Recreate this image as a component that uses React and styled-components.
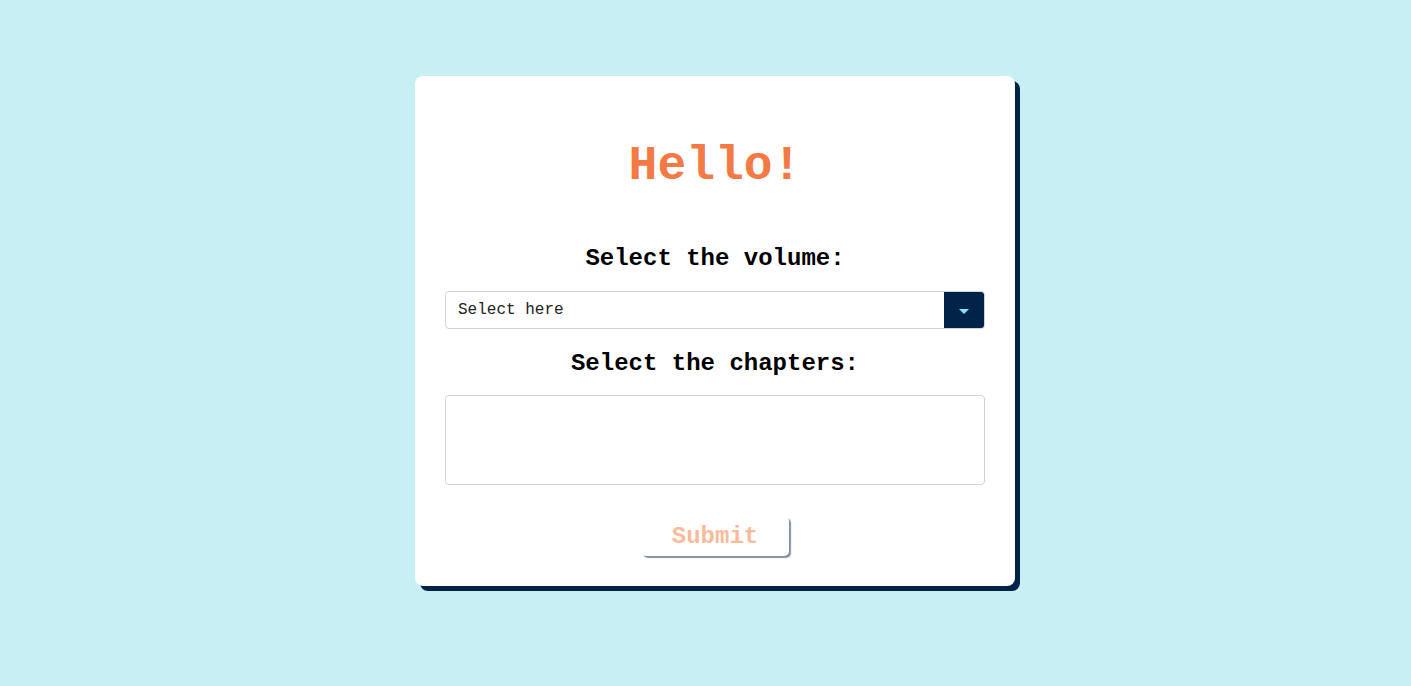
import React from "react";
import styled, { createGlobalStyle } from "styled-components";

const Global = createGlobalStyle`
  html, body { margin: 0; padding: 0; background: #c8eff4; }
  body { font-family: "Liberation Mono", "Courier New", monospace; }
`;

const Page = styled.div`
  min-height: 686px;
  display: flex;
  justify-content: center;
  align-items: flex-start;
  padding: 76px 0 0 19px;
  box-sizing: border-box;
`;

const Card = styled.form`
  width: 600px;
  box-sizing: border-box;
  background: #ffffff;
  border-radius: 8px;
  box-shadow: 5px 5px 0 #002347;
  padding: 30px 30px 30px;
  display: flex;
  flex-direction: column;
  align-items: stretch;
`;

const Title = styled.h1`
  margin: 32px 0 0;
  font-size: 48px;
  line-height: 56px;
  font-weight: 700;
  color: #f47a45;
  text-align: center;
`;

const Label = styled.label`
  display: block;
  margin-top: ${(p) => p.$top}px;
  font-size: 24px;
  line-height: 28px;
  font-weight: 700;
  color: #000;
  text-align: center;
`;

const SelectBox = styled.div`
  margin-top: 18px;
  height: 38px;
  box-sizing: border-box;
  border: 1px solid #cfd3d9;
  border-radius: 4px;
  display: flex;
  align-items: stretch;
  overflow: hidden;
`;

const SelectText = styled.div`
  flex: 1;
  display: flex;
  align-items: center;
  padding-left: 12px;
  font-size: 16px;
  color: #222;
`;

const Arrow = styled.div`
  width: 40px;
  background: #002347;
  display: flex;
  align-items: center;
  justify-content: center;
  &::after {
    content: "";
    width: 0;
    height: 0;
    border-left: 5px solid transparent;
    border-right: 5px solid transparent;
    border-top: 5px solid #7fe9f7;
    margin-top: 2px;
  }
`;

const Area = styled.div`
  margin-top: 17px;
  height: 90px;
  box-sizing: border-box;
  border: 1px solid #cfd3d9;
  border-radius: 4px;
`;

const Submit = styled.button`
  align-self: center;
  margin: 31px 0 0 0;
  width: 148px;
  height: 40px;
  border: none;
  border-radius: 5px;
  background: #fff;
  box-shadow: 2px 2px 1px #8493a6;
  font-family: "Liberation Mono", "Courier New", monospace;
  font-weight: 700;
  font-size: 24px;
  color: #f9bb9c;
  padding: 0;
  cursor: default;
`;

export default function App() {
  return (
    <>
      <Global />
      <Page>
        <Card onSubmit={(e) => e.preventDefault()}>
          <Title>Hello!</Title>
          <Label $top={51}>Select the volume:</Label>
          <SelectBox>
            <SelectText>Select here</SelectText>
            <Arrow />
          </SelectBox>
          <Label $top={21}>Select the chapters:</Label>
          <Area />
          <Submit type="button">Submit</Submit>
        </Card>
      </Page>
    </>
  );
}
